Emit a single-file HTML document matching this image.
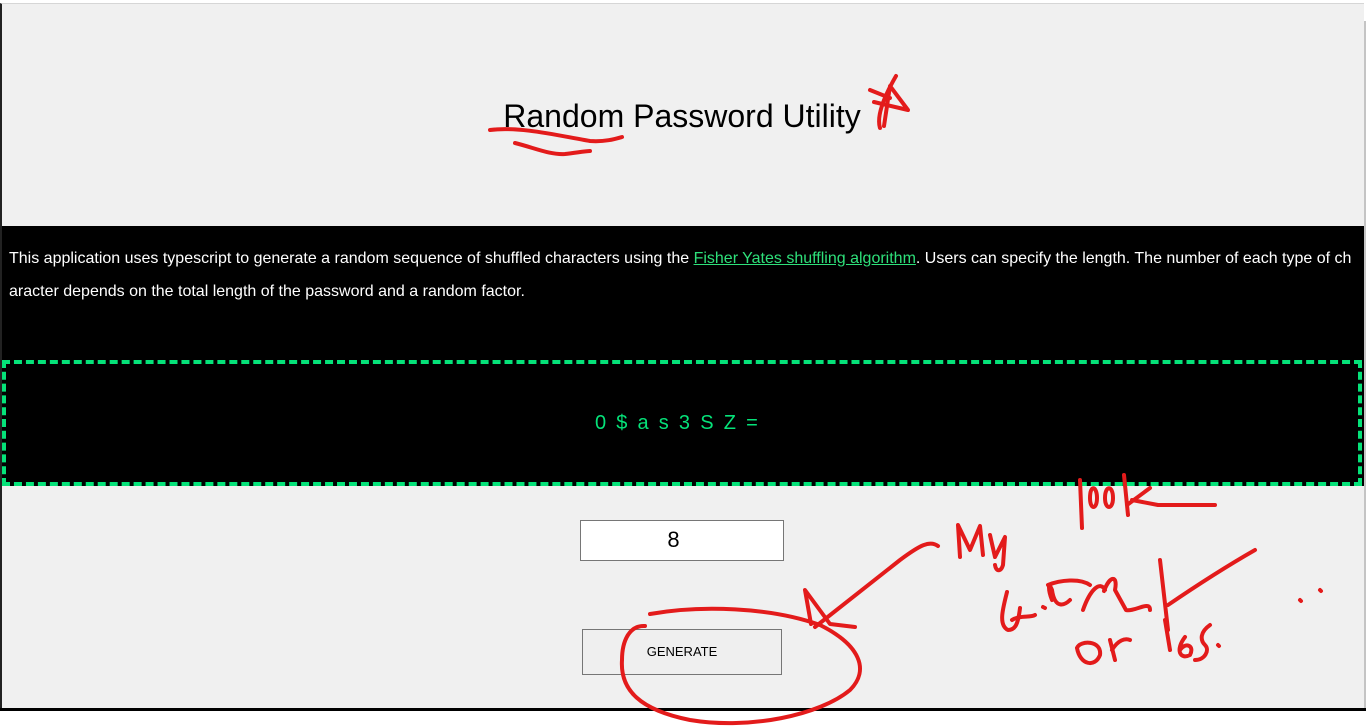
<!DOCTYPE html>
<html><head><meta charset="utf-8"><style>
html,body{margin:0;padding:0;width:1366px;height:727px;overflow:hidden;background:#fff;font-family:"Liberation Sans",Arial,sans-serif;}
#page{position:absolute;left:0;top:3px;width:1364px;height:705px;background:#f0f0f0;border-top:1px solid #d6d6d6;border-left:2px solid #222;box-sizing:border-box;}
#rb{position:absolute;left:1364px;top:21px;width:2px;height:687px;background:#c4c4c4;}
#bl{position:absolute;left:0;top:708px;width:1366px;height:3px;background:#000;}
h1{position:absolute;left:0;width:1364px;top:98px;margin:0;text-align:center;font-weight:normal;font-size:32px;color:#000;}
#blk{position:absolute;left:2px;top:226px;width:1362px;height:260px;background:#000;}
#desc{position:absolute;left:9px;top:242px;width:1345px;color:#fff;font-size:16px;line-height:33px;word-break:break-all;}
#desc a{color:#2ee07a;text-decoration:underline;}
#dash{position:absolute;left:2px;top:360px;width:1360px;height:126px;border:4px dashed #05e279;box-sizing:border-box;}
#pw{position:absolute;left:0;width:1354px;top:412px;text-align:center;color:#05e279;font-size:20px;letter-spacing:1.3px;word-spacing:2px;}
#inp{position:absolute;left:580px;top:520px;width:204px;height:41px;background:#fff;border:1px solid #767676;box-sizing:border-box;text-align:center;font-size:22px;line-height:38px;padding-right:17px;}
#btn{position:absolute;left:582px;top:629px;width:200px;height:46px;background:#efefef;border:1px solid #767676;box-sizing:border-box;text-align:center;font-size:13px;line-height:43px;color:#000;}
svg{position:absolute;left:0;top:0;}
</style></head><body>
<div id="page"></div><div id="rb"></div><div id="bl"></div>
<h1>Random Password Utility</h1>
<div id="blk"></div>
<div id="desc">This application uses typescript to generate a random sequence of shuffled characters using the <a>Fisher Yates shuffling algorithm</a>. Users can specify the length. The number of each type of character depends on the total length of the password and a random factor.</div>
<div id="dash"></div>
<div id="pw">0 $ a s 3 S Z =</div>
<div id="inp">8</div>
<div id="btn">GENERATE</div>
<svg width="1366" height="727" fill="none" stroke="#e31b1b" stroke-width="4" stroke-linecap="round" stroke-linejoin="round">
<path d="M490 130 C520 126 560 136 590 141 C605 142 615 139 622 137"/>
<path d="M515 143 C535 148 550 155 565 154 C575 153 585 151 590 151"/>
<path d="M896 76 C885 95 876 115 880 128 M874 102 L908 110 L890 86 L884 126 M870 90 L890 98"/>
<path d="M650 614 C700 605 770 607 820 625 C860 645 870 670 850 690 C820 715 750 730 690 720 C640 710 620 690 622 660 C622 640 630 625 645 626"/>
<path d="M811 624 L805 590 L830 624 L855 627 M815 627 L900 560 C920 545 930 540 938 546"/>
<path d="M960 557 L958 525 L970 550 L980 526 L983 555 M990 535 L995 557 L1005 537 L1003 565 C1001 572 996 572 995 565"/>
<path d="M1080 480 L1082 528 M1090 498 C1090 484 1097 486 1097 498 C1097 510 1090 510 1090 498 M1105 498 C1105 485 1113 485 1113 498 C1113 510 1105 510 1105 498 M1124 475 L1128 515 M1127 505 L1150 488 M1132 500 L1158 505 L1215 505"/>
<path d="M1007 592 C1003 608 998 625 1008 630 C1015 630 1018 625 1020 608 M1012 620 C1020 615 1030 618 1035 615"/>
<path d="M1043 607 L1045 608 M1052 600 C1048 590 1048 580 1052 590 C1055 610 1065 605 1070 600 M1048 585 C1060 580 1080 578 1090 585"/>
<path d="M1083 610 C1090 590 1100 580 1105 590 M1104 591 C1110 575 1118 575 1115 590 L1126 610 C1135 612 1150 600 1150 610 M1160 560 L1168 630 M1168 605 C1190 590 1220 570 1255 550"/>
<path d="M1077 648 C1080 665 1095 668 1100 655 C1102 640 1080 640 1077 648 M1110 640 L1115 660 M1112 650 C1118 640 1125 638 1130 640 M1165 620 L1170 650 M1185 637 C1175 650 1180 660 1190 655 C1195 645 1185 642 1180 650 M1210 625 C1200 632 1200 640 1205 645 C1210 650 1205 660 1195 660 M1218 645 L1219 646 M1300 600 L1301 601 M1320 590 L1321 591"/>
</svg>
</body></html>
